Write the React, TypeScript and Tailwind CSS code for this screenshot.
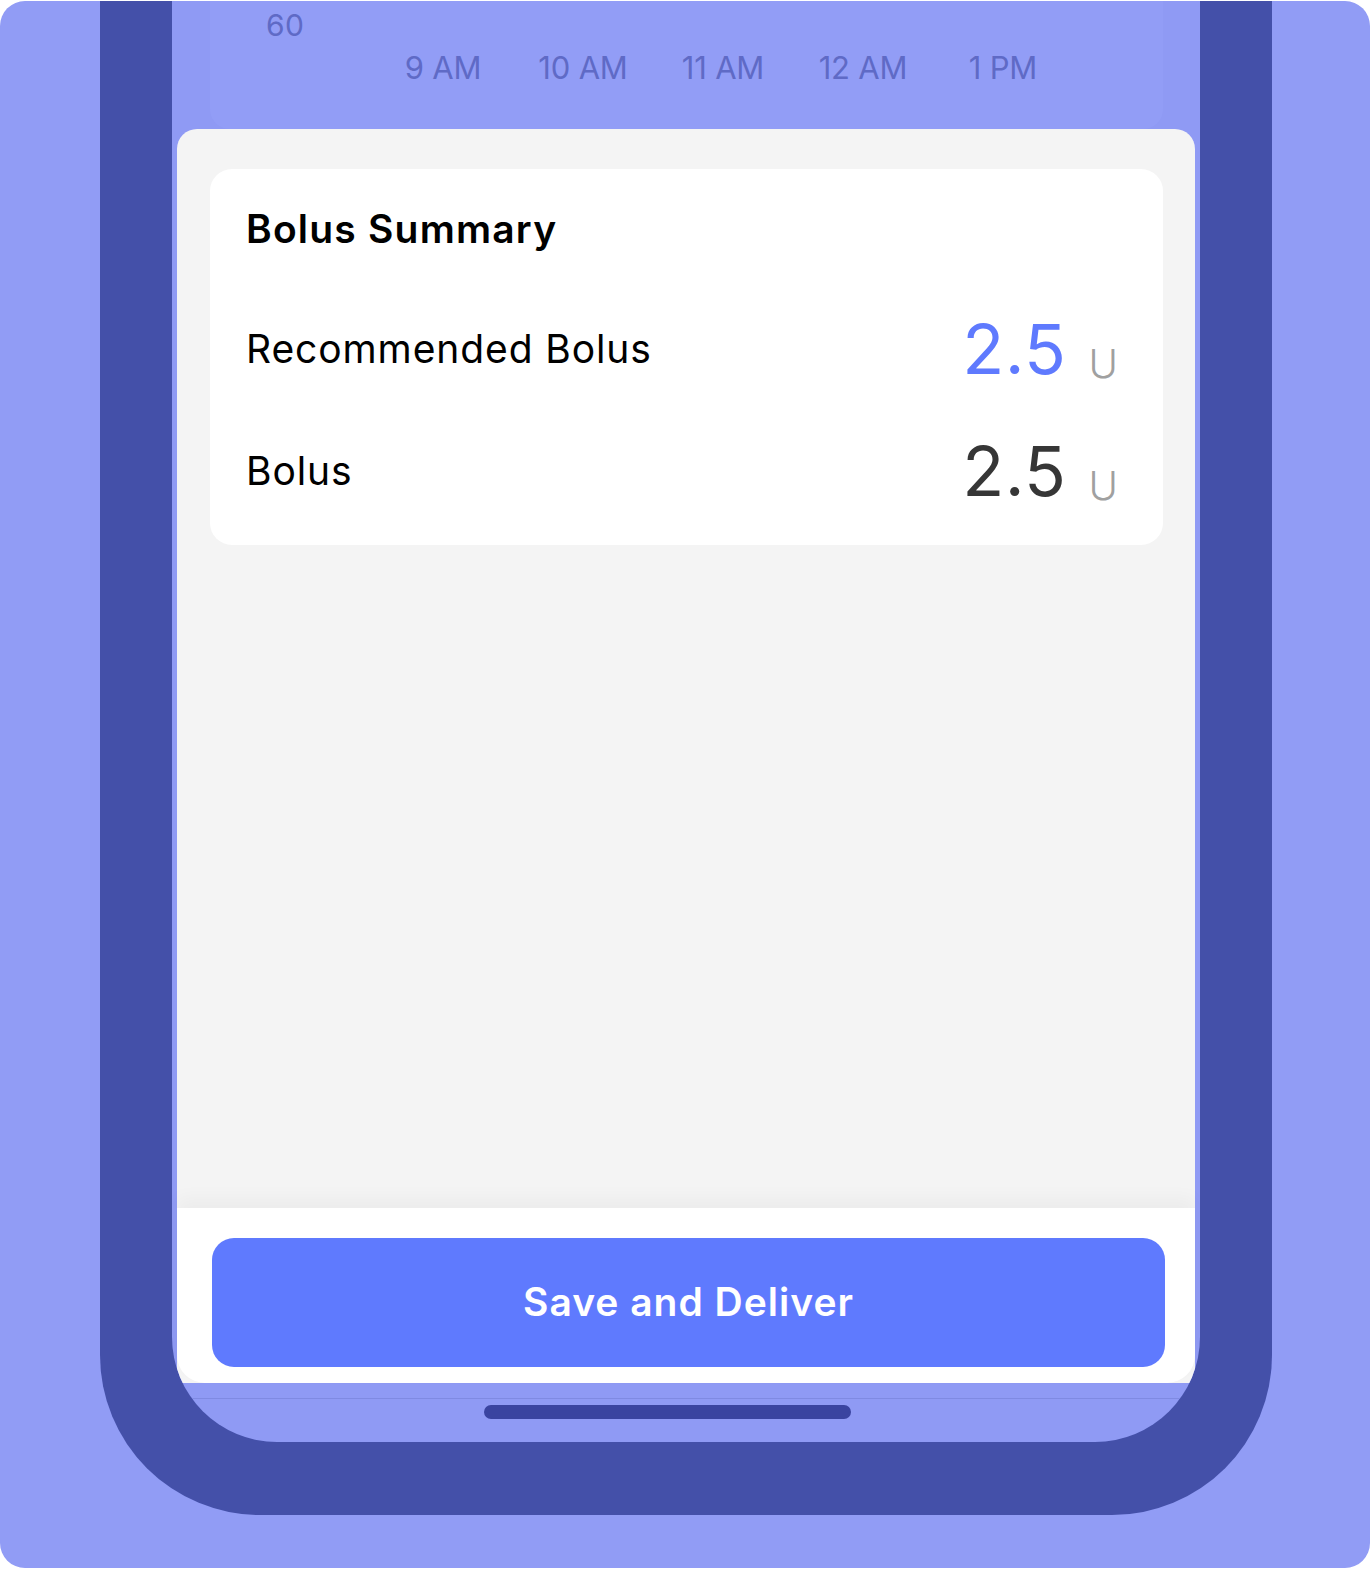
import React from "react";

const times = ["9 AM", "10 AM", "11 AM", "12 AM", "1 PM"];

export default function App() {
  return (
    <div
      className="min-h-screen bg-white pt-px"
      style={{ fontFamily: "Inter, 'Noto Sans', 'Liberation Sans', sans-serif" }}
    >
      <div className="w-[1370px] h-[1567px] rounded-[25px] bg-[#919cf5] overflow-hidden flex flex-col px-[100px]">
        {/* phone frame */}
        <div className="w-[1172px] h-[1514px] bg-[#4450a9] rounded-b-[160px] px-[72px] pb-[73px] flex flex-col">
          {/* screen */}
          <div className="flex-1 bg-[#8f9af4] rounded-b-[105px] overflow-hidden flex flex-col">
            {/* chart card (dimmed behind sheet) */}
            <div className="h-[128px] pl-[38px] pr-[37px] flex flex-col">
              <div className="h-full bg-[#929df6] rounded-b-[20px]">
                <div className="pl-[56px] pt-[6px] text-[30px] leading-[36px] text-[#5f6ac6] tracking-[0.3px]">60</div>
                <div className="flex pl-[163px] pt-[6px]">
                  {times.map((t) => (
                    <div
                      key={t}
                      className="w-[140px] text-center text-[31px] leading-[38px] text-[#5f6ac6] tracking-[-0.2px]"
                    >
                      {t}
                    </div>
                  ))}
                </div>
              </div>
            </div>

            {/* sheet */}
            <div className="mx-[5px] h-[1254px] bg-[#f4f4f4] rounded-t-[20px] flex flex-col">
              <div className="mt-[40px] ml-[33px] mr-[32px] h-[376px] bg-white rounded-[22px] pl-[36px] pr-[45px] pt-[36px] flex flex-col">
                <div className="text-[39px] leading-[48px] font-semibold text-black tracking-[1.2px]">
                  Bolus Summary
                </div>
                <div className="mt-[35px] h-[122px] flex items-center justify-between">
                  <div className="text-[39px] leading-[48px] text-black tracking-[0.9px]">Recommended Bolus</div>
                  <div className="flex items-baseline gap-[22px]">
                    <span className="text-[69px] leading-[80px] text-[#5f7afe] tracking-[0.5px]">2.5</span>
                    <span className="text-[40px] leading-[48px] text-[#a0a0a0] font-light translate-y-[4px]">U</span>
                  </div>
                </div>
                <div className="h-[122px] flex items-center justify-between">
                  <div className="text-[39px] leading-[48px] text-black tracking-[0.9px]">Bolus</div>
                  <div className="flex items-baseline gap-[22px]">
                    <span className="text-[69px] leading-[80px] text-[#363636] tracking-[0.5px]">2.5</span>
                    <span className="text-[40px] leading-[48px] text-[#a0a0a0] font-light translate-y-[4px]">U</span>
                  </div>
                </div>
              </div>
              <div className="flex-1" />
              <div className="h-[175px] bg-white rounded-b-[28px] pt-[30px] pl-[35px] pr-[30px] shadow-[0_-10px_18px_rgba(0,0,0,0.035)]">
                <div className="h-[129px] bg-[#5f7afe] rounded-[22px] flex items-center justify-center">
                  <span className="text-white text-[39px] font-semibold tracking-[1px]">Save and Deliver</span>
                </div>
              </div>
            </div>

            {/* bottom area */}
            <div className="h-[15px]" />
            <div className="h-px bg-[#7f8ae2]" />
            <div className="pl-[312px] pt-[6px]">
              <div className="w-[367px] h-[14px] rounded-full bg-[#3a44a0]" />
            </div>
          </div>
        </div>
      </div>
    </div>
  );
}
